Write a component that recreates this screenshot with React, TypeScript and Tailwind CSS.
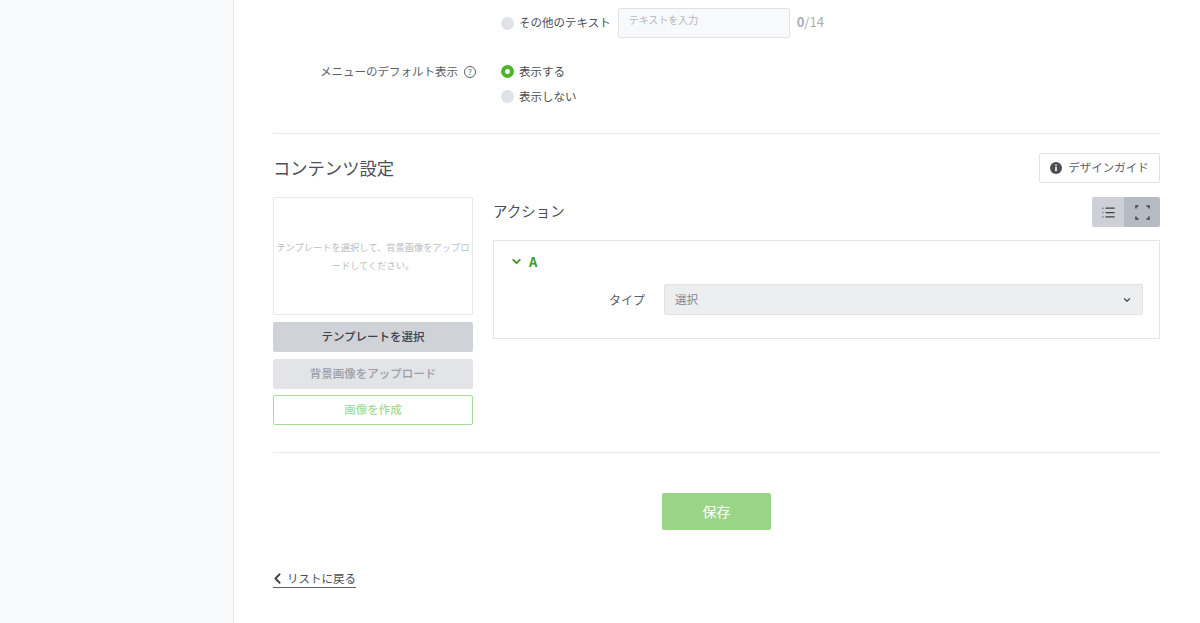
import { ChevronDown, ChevronLeft, List } from 'lucide-react';

const font = "font-['Noto_Sans_CJK_JP','Noto_Sans',sans-serif]";

function Radio({ checked = false }: { checked?: boolean }) {
    if (checked) {
        return <span className="w-[13px] h-[13px] rounded-full border-[4px] border-[#4cb32b] bg-white shrink-0" />;
    }
    return <span className="w-[13px] h-[13px] rounded-full bg-[#dfe2e7] shrink-0" />;
}

function ExpandIcon() {
    return (
        <svg width="15" height="15" viewBox="0 0 15 15" fill="none" stroke="#3c4149" strokeWidth="1.5">
            <path d="M1 3.5V1H3.5M11.5 1H14V3.5M14 11.5V14H11.5M3.5 14H1V11.5" />
        </svg>
    );
}

function InfoDot() {
    return (
        <svg width="12" height="12" viewBox="0 0 12 12">
            <circle cx="6" cy="6" r="6" fill="#4a4e55" />
            <rect x="5.2" y="2.6" width="1.6" height="1.5" fill="#fff" />
            <rect x="5.2" y="5" width="1.6" height="4.2" fill="#fff" />
        </svg>
    );
}

export default function App() {
    return (
        <div className={`${font} flex h-[623px] w-[1200px] overflow-hidden bg-white text-[#5b6068]`}>
            {/* Sidebar */}
            <div className="w-[234px] shrink-0 bg-[#f8f9fb] border-r border-[#e3e6ea]" />

            <div className="w-[887px] ml-[39px] shrink-0">
                {/* Other text option */}
                <div className="flex h-[38px] mt-[4px] items-center pl-[228px]">
                    <Radio />
                    <span className="ml-[5px] text-[11.5px] text-[#4a4e55] leading-none">その他のテキスト</span>
                    <div className="ml-[7px] w-[172px] h-[30px] mb-[1px] bg-[#f8f9fa] border border-[#dfe2e6] rounded-[2px] text-[10px] leading-none pl-[10px] pt-[6px] text-[#b4b8be]">
                        テキストを入力
                    </div>
                    <span className="ml-[7px] text-[13px] font-bold text-[#a9aeb6] leading-none pb-[3px]">
                        0<span className="font-normal">/14</span>
                    </span>
                </div>

                {/* Menu default display */}
                <div className="flex mt-[17px] h-[25px] items-center">
                    <div className="w-[203px] flex items-center justify-end">
                        <span className="text-[11.5px] leading-none whitespace-nowrap">メニューのデフォルト表示</span>
                        <span className="ml-[6px] w-[12px] h-[12px] rounded-full border border-[#5b6068] text-[8px] leading-none flex items-center justify-center">?</span>
                    </div>
                    <div className="ml-[25px] flex items-center gap-[5px]">
                        <Radio checked />
                        <span className="text-[11.5px] text-[#4a4e55] leading-none">表示する</span>
                    </div>
                </div>
                <div className="flex h-[25px] items-center pl-[228px] gap-[5px]">
                    <Radio />
                    <span className="text-[11.5px] text-[#4a4e55] leading-none">表示しない</span>
                </div>

                <div className="h-px bg-[#e6e8eb] mt-[24px]" />

                {/* Contents settings */}
                <div className="flex items-center justify-between mt-[19px] h-[30px]">
                    <h2 className="text-[17.3px] font-normal text-[#4a4e55] leading-none">コンテンツ設定</h2>
                    <button className="w-[121px] h-[30px] border border-[#e0e2e6] rounded-[2px] flex items-center justify-center gap-[6px] text-[11.5px]">
                        <InfoDot />
                        デザインガイド
                    </button>
                </div>

                <div className="flex mt-[14px] gap-5">
                    {/* Left column */}
                    <div className="w-[200px] shrink-0 flex flex-col">
                        <div className="h-[118px] border border-[#e6e8eb] flex items-center justify-center text-center text-[9.25px] leading-[18px] text-[#b9bdc3]">
                            テンプレートを選択して、背景画像をアップロードしてください。
                        </div>
                        <button className="mt-[7px] h-[30px] bg-[#cfd2d6] rounded-[2px] text-[11.5px] font-medium text-[#3c4047]">テンプレートを選択</button>
                        <button className="mt-[7px] h-[30px] bg-[#e2e4e8] rounded-[2px] text-[11.5px] font-medium text-[#9a9ea5]">背景画像をアップロード</button>
                        <button className="mt-[6px] h-[30px] border border-[#a6dc96] rounded-[2px] text-[11.5px] font-medium text-[#a6dc96]">画像を作成</button>
                    </div>

                    {/* Action column */}
                    <div className="flex-1">
                        <div className="flex items-center justify-between h-[30px]">
                            <h3 className="text-[14.5px] font-normal text-[#4a4e55] leading-none pb-[2px]">アクション</h3>
                            <div className="flex h-[30px]">
                                <div className="w-[32px] bg-[#cdd0d6] rounded-l-[2px] flex items-center justify-center">
                                    <List size={15} color="#3c4149" />
                                </div>
                                <div className="w-[36px] bg-[#b5bac3] rounded-r-[2px] flex items-center justify-center">
                                    <ExpandIcon />
                                </div>
                            </div>
                        </div>
                        <div className="mt-[13px] h-[99px] border border-[#e3e5e8] px-4 pt-[13px]">
                            <div className="flex items-center h-[14px] text-[#3d9a1f]">
                                <ChevronDown size={13} strokeWidth={3.5} />
                                <span className="ml-[6px] text-[13px] font-bold leading-none">A</span>
                            </div>
                            <div className="flex items-center mt-[16px]">
                                <span className="w-[135px] text-right text-[12px] leading-none">タイプ</span>
                                <div className="ml-[19px] flex-1 h-[31px] bg-[#edeef0] border border-[#e0e2e6] rounded-[2px] flex items-center justify-between pl-[10px] pr-[10px] text-[11.5px] text-[#83878e]">
                                    選択
                                    <ChevronDown size={10} strokeWidth={3} color="#4a4e55" />
                                </div>
                            </div>
                        </div>
                    </div>
                </div>

                <div className="h-px bg-[#e6e8eb] mt-[27px]" />

                {/* Save */}
                <div className="flex justify-center mt-10">
                    <button className="w-[109px] h-[37px] bg-[#9ad587] rounded-[2px] text-white text-[14px] leading-none pb-[2px]">保存</button>
                </div>

                {/* Back link */}
                <div className="mt-[38px]">
                    <a className="inline-flex items-center border-b border-[#5b6068] h-[18px] text-[11.5px] text-[#4a4e55] leading-none">
                        <ChevronLeft size={17} strokeWidth={2.5} className="-ml-[4px] mr-[1px]" color="#3c4149" />
                        リストに戻る
                    </a>
                </div>
            </div>
        </div>
    );
}
